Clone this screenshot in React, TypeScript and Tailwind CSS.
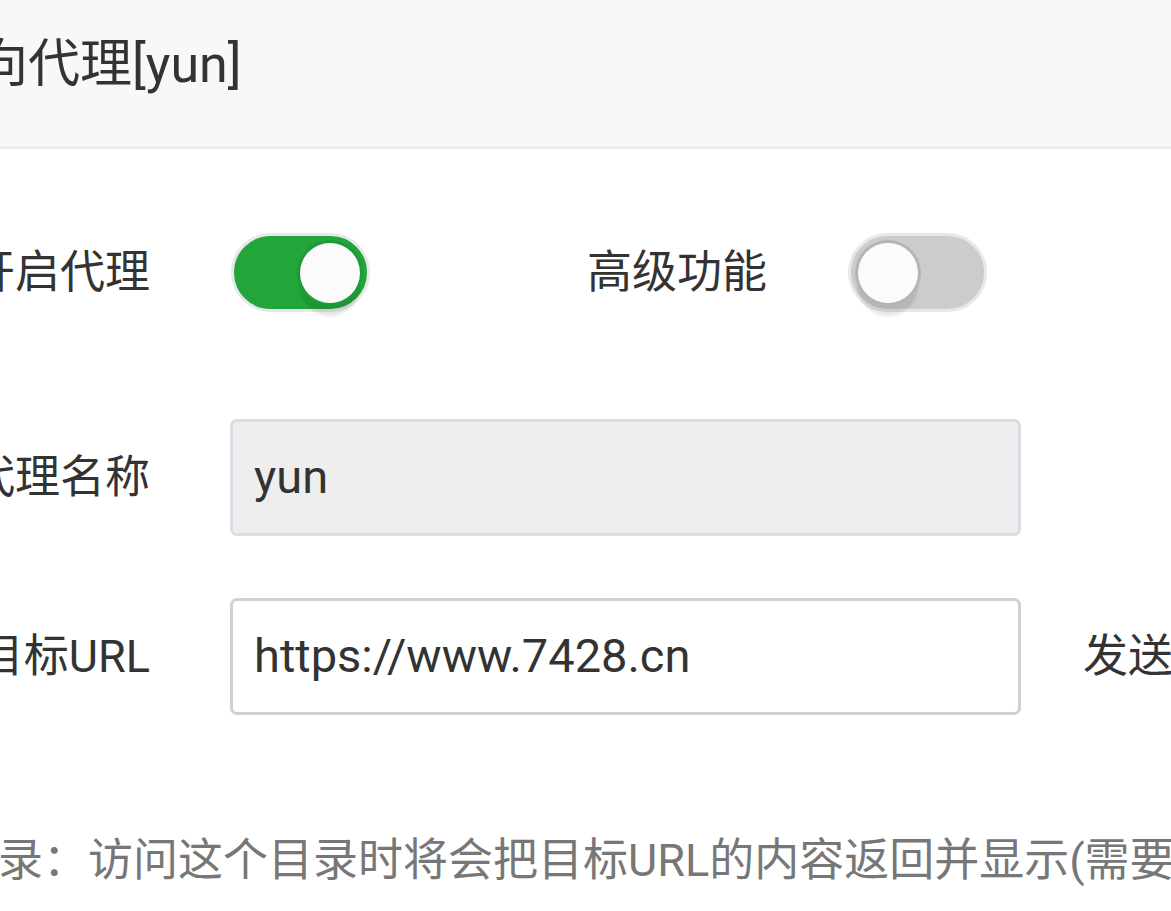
import React from "react";

const font = "font-['Roboto','Noto_Sans_CJK_SC',sans-serif]";

const Toggle = ({ on }: { on: boolean }) => (
  <div
    className={`flex items-center w-[139px] h-[79px] rounded-full border-[3px] border-[#e8e8e8] px-[7px] ${
      on ? "bg-[#22a63c] justify-end" : "bg-[#cccccc] justify-start"
    }`}
  >
    <div
      className={`w-[60px] h-[60px] rounded-full bg-[#fbfbfb] ${
        on
          ? "shadow-[0_0_0_3px_#1f9a37,0_13px_3px_rgba(0,0,0,0.1)]"
          : "shadow-[0_0_0_3px_#b4b4b4,0_13px_3px_rgba(0,0,0,0.1)]"
      }`}
    />
  </div>
);

export default function App() {
  return (
    <div className={`${font} w-[1171px] h-[911px] overflow-hidden bg-white text-[#333]`}>
      <div className="flex items-center h-[149px] pb-[16px] bg-[#f8f8f8] border-b-[3px] border-[#eeeeee]">
        <span className="-ml-[76px] whitespace-nowrap text-[52px] leading-none">反向代理[yun]</span>
      </div>

      <div className="flex items-center mt-[84px] h-[79px]">
        <div className="-ml-[180px] w-[330px] shrink-0 text-right text-[45px] whitespace-nowrap">开启代理</div>
        <div className="ml-[81px] shrink-0">
          <Toggle on />
        </div>
        <div className="w-[397px] shrink-0 text-right text-[45px] whitespace-nowrap">高级功能</div>
        <div className="ml-[81px] shrink-0">
          <Toggle on={false} />
        </div>
      </div>

      <div className="flex items-center mt-[107px]">
        <div className="-ml-[180px] w-[330px] shrink-0 text-right text-[45px] whitespace-nowrap">代理名称</div>
        <div className="ml-[80px] shrink-0 flex items-center w-[791px] h-[117px] rounded-[7px] border-[3px] border-[#dcdbe6] bg-[#eeeeee] pl-[21px] text-[47px]">
          yun
        </div>
      </div>

      <div className="flex items-center mt-[62px]">
        <div className="-ml-[180px] w-[330px] shrink-0 text-right text-[45px] whitespace-nowrap">目标URL</div>
        <div className="ml-[80px] shrink-0 flex items-center w-[791px] h-[117px] rounded-[7px] border-[3px] border-[#d0d0d0] bg-white pl-[21px] text-[47px]">
          https://www.7428.cn
        </div>
        <div className="ml-[62px] shrink-0 text-[45px] whitespace-nowrap">发送域名</div>
      </div>

      <div className="mt-[116px] -ml-[137px] whitespace-nowrap text-[45px] leading-[60px] text-[#777]">
        代理目录：访问这个目录时将会把目标URL的内容返回并显示(需要开启高级功能)
      </div>
    </div>
  );
}
